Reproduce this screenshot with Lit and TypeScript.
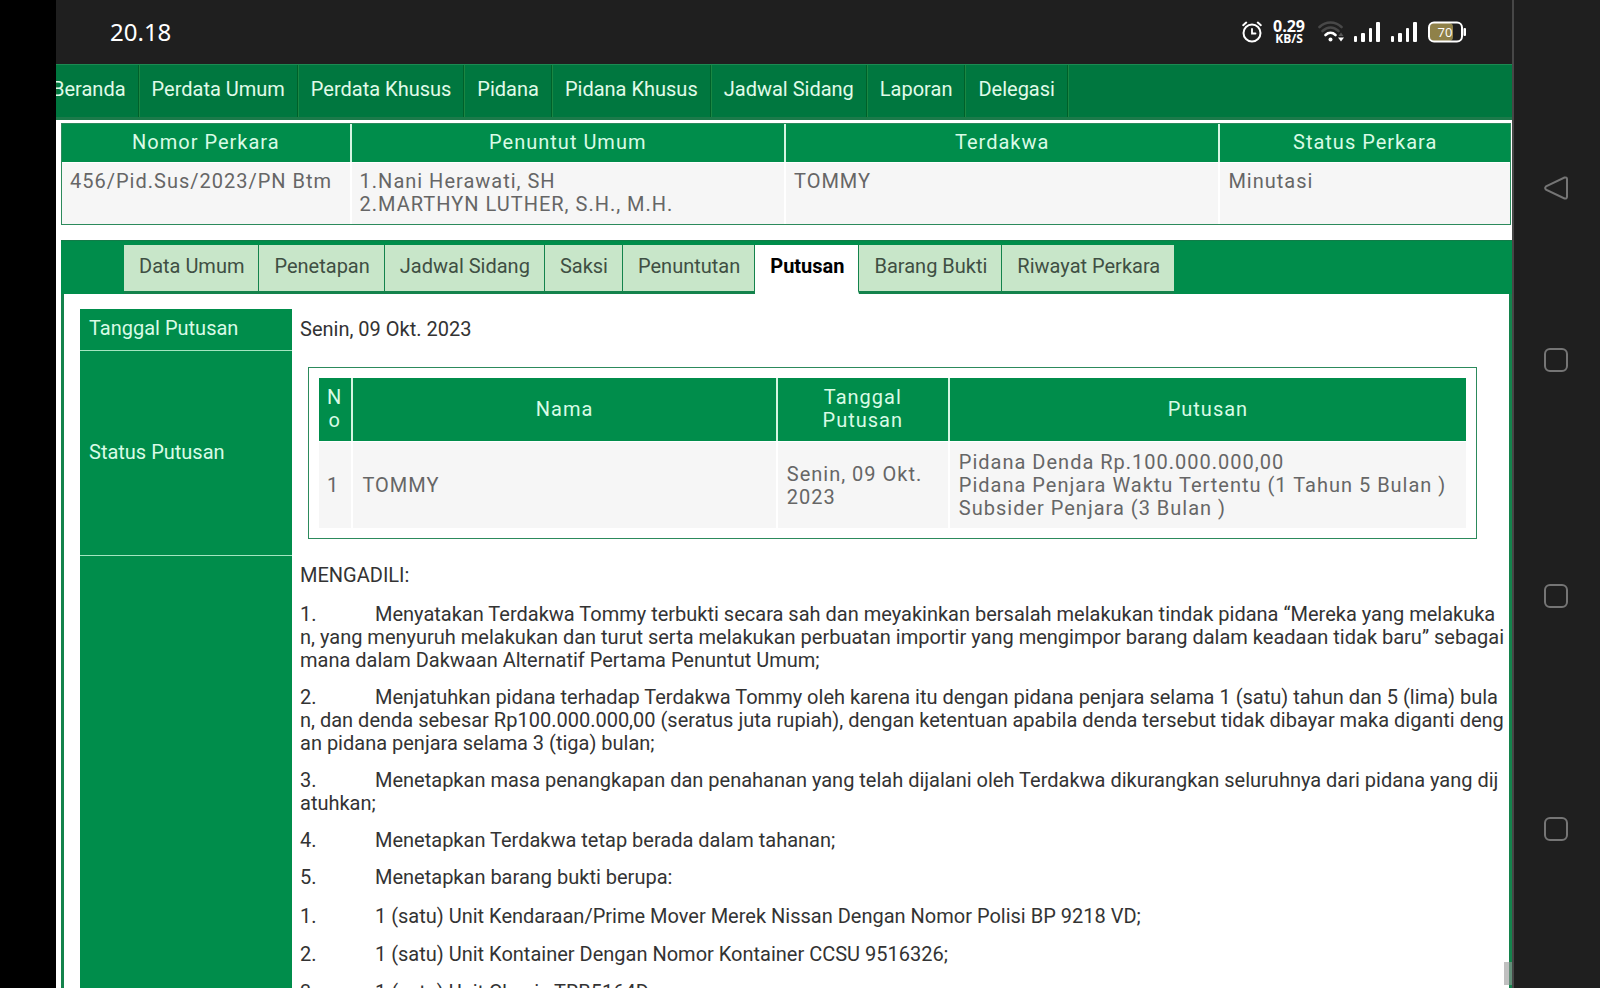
import { LitElement, html, css, svg } from "lit";
import { customElement, state } from "lit/decorators.js";

const MENU = ["Beranda", "Perdata Umum", "Perdata Khusus", "Pidana", "Pidana Khusus", "Jadwal Sidang", "Laporan", "Delegasi"];
const TABS = ["Data Umum", "Penetapan", "Jadwal Sidang", "Saksi", "Penuntutan", "Putusan", "Barang Bukti", "Riwayat Perkara"];

const RULINGS = [
  "Menyatakan Terdakwa Tommy terbukti secara sah dan meyakinkan bersalah melakukan tindak pidana “Mereka yang melakuka\nn, yang menyuruh melakukan dan turut serta melakukan perbuatan importir yang mengimpor barang dalam keadaan tidak baru” sebagai\nmana dalam Dakwaan Alternatif Pertama Penuntut Umum;",
  "Menjatuhkan pidana terhadap Terdakwa Tommy oleh karena itu dengan pidana penjara selama 1 (satu) tahun dan 5 (lima) bula\nn, dan denda sebesar Rp100.000.000,00 (seratus juta rupiah), dengan ketentuan apabila denda tersebut tidak dibayar maka diganti deng\nan pidana penjara selama 3 (tiga) bulan;",
  "Menetapkan masa penangkapan dan penahanan yang telah dijalani oleh Terdakwa dikurangkan seluruhnya dari pidana yang dij\natuhkan;",
  "Menetapkan Terdakwa tetap berada dalam tahanan;",
  "Menetapkan barang bukti berupa:",
];

const EVIDENCE = [
  "1 (satu) Unit Kendaraan/Prime Mover Merek Nissan Dengan Nomor Polisi BP 9218 VD;",
  "1 (satu) Unit Kontainer Dengan Nomor Kontainer CCSU 9516326;",
  "1 (satu) Unit Chasis TRB5164D;",
];

@customElement("status-bar")
export class StatusBar extends LitElement {
  static styles = css`
    :host { display: flex; align-items: center; justify-content: space-between; height: 64px; flex: none;
      padding: 0 46px 0 54px; background: #1f1f1f; color: #fff; font-family: "Noto Sans", sans-serif; }
    .clock { font-size: 24px; line-height: 32px; }
    .icons { display: flex; align-items: center; }
    .rate { display: flex; flex-direction: column; align-items: center; width: 34px; margin: 0 12px 0 9px;
      font-family: "Open Sans", sans-serif; font-weight: 700; }
    .speed { font-size: 16px; line-height: 14px; }
    .unit { font-size: 12px; line-height: 12px; }
    .wifi { margin-right: 9px; }
    .bars { margin-right: 11px; }
    .battery { display: block; }
    .level { font: 13px "Open Sans", sans-serif; }
    svg { display: block; }
  `;

  private bars() {
    return html`<svg class="bars" width="26" height="22" viewBox="0 0 26 22" fill="#fff" aria-hidden="true">
      <rect x="0" y="15" width="3" height="6" rx="1" /><rect x="7" y="12" width="4" height="9" rx="1" />
      <rect x="15" y="7" width="3" height="14" rx="1" /><rect x="22" y="1" width="4" height="20" rx="1" />
    </svg>`;
  }

  render() {
    return html`
      <time class="clock">20.18</time>
      <div class="icons">
        <svg width="21" height="22" viewBox="0 0 21 22" fill="none" stroke="#fff" stroke-width="2" stroke-linecap="round" aria-hidden="true">
          <circle cx="10" cy="12" r="8.500" /><path d="M10 8v4.500h3.500" stroke-width="1.800" />
          <path d="M1.200 4.200 4.200 1.600M18.800 4.200l-3-2.600" />
        </svg>
        <div class="rate"><span class="speed">0.29</span><span class="unit">KB/S</span></div>
        <svg class="wifi" width="27" height="22" viewBox="0 0 27 22" fill="none" stroke-width="2.600" stroke-linecap="round" aria-hidden="true">
          <path d="M1.500 6C8 0 17 0 23.500 6" stroke="#484848" />
          <path d="M4.500 10c5-4.600 11-4.600 16 0" stroke="#484848" />
          <path d="M7.500 14c3-2.800 7-2.800 10 0" stroke="#fff" />
          <circle cx="12.500" cy="18.500" r="2" fill="#fff" />
          <path d="M20.500 15l2.500-3.500 2.500 3.500z" fill="#555" />
          <path d="M20 16.500h6l-3 4z" fill="#fff" />
        </svg>
        ${this.bars()}${this.bars()}
        <svg class="battery" width="38" height="22" viewBox="0 0 38 22" role="img" aria-label="Baterai 70">
          <rect x="2" y="2" width="23" height="18" rx="4" fill="#8f8149" />
          <rect x="1" y="1.500" width="33" height="19" rx="5" fill="none" stroke="#fff" stroke-width="2" />
          <rect x="35.500" y="7" width="2.500" height="8" rx="1" fill="#fff" />
          <text class="level" x="17" y="15.500" text-anchor="middle" fill="#fff">70</text>
        </svg>
      </div>
    `;
  }
}

@customElement("system-keys")
export class SystemKeys extends LitElement {
  static styles = css`
    :host { display: grid; grid-template-rows: 100fr 244fr 228fr 238fr; place-items: center; box-sizing: border-box;
      height: 100vh; padding: 138px 2px 40px 0; background: #1f1f1f; border-left: 2px solid #474747; }
    .key { display: grid; place-items: center; width: 48px; height: 48px; padding: 0; border: 0; background: none; }
    svg { display: block; }
  `;

  render() {
    const square = svg`<rect x="1" y="1" width="22" height="22" rx="5" />`;
    const back = svg`<path d="M2 10.400 20.500 1.500Q22.800 1 23 3v18Q22.800 23 20.500 22.500L2 13.600Q.4 12 2 10.400Z" />`;
    const keys = [
      ["Kembali", back],
      ["Beranda", square],
      ["Aplikasi terbaru", square],
      ["Menu", square],
    ] as const;
    return keys.map(
      ([label, shape]) => html`<button class="key" type="button" aria-label=${label}>
        <svg width="24" height="24" viewBox="0 0 24 24" fill="none" stroke="#757575" stroke-width="2">${shape}</svg>
      </button>`
    );
  }
}

@customElement("app-root")
export class AppRoot extends LitElement {
  @state() private active = "Putusan";

  static styles = css`
    :host { display: grid; grid-template-columns: 56px minmax(0, 1fr) 88px; height: 100vh; overflow: hidden;
      background: #000; font: 20px/23px Roboto, sans-serif; color: #333; }
    .screen { grid-column: 2; display: flex; flex-direction: column; height: 100vh; background: #fff; overflow: hidden; position: relative; }
    .menu { display: flex; flex: none; box-sizing: border-box; height: 56px; padding-right: 16px; background: #00773f;
      border-top: 1px solid #1c8a52; border-bottom: 3px solid #1c7a4a; }
    .items { display: flex; margin: 0 0 0 -16px; padding: 0; list-style: none; }
    .link { display: block; box-sizing: border-box; height: 52px; padding: 13px 12px 0; color: #e0fbe9; text-decoration: none;
      white-space: nowrap; border-right: 1px solid #00602a; }
    .item { border-right: 1px solid #1b8743; }
    .page { flex: 1; min-height: 0; display: flex; flex-direction: column; gap: 15px; padding: 3px 0 0 5px; }

    table { border-spacing: 0; table-layout: fixed; width: 100%; }
    th, td { box-sizing: border-box; }
    th { font-weight: 400; }
    .grid { letter-spacing: 1px; color: #666; }
    .grid th { background: #008d4b; color: #d9fbe6; border-right: 2px solid #d5f5e2; }
    .grid td { background: #f6f6f6; border-right: 2px solid #fff; border-top: 1px solid #fff; }
    .grid tr > :last-child { border-right: 0; }

    .case { flex: none; box-sizing: border-box; width: calc(100% - 1px); border: 1px solid #2c8a5c; }
    .case th { padding: 7px 8px 8px; }
    .case td { height: 62px; padding: 7px 8px; vertical-align: top; }
    .case .w20 { width: 20%; }
    .case .w30 { width: 30%; }

    .detail { flex: 1; min-height: 0; display: flex; flex-direction: column; }
    .tabs { display: flex; flex: none; padding: 4px 0 0 63px; background: #008d4b; border-top: 1px solid #117c48; }
    .tab { box-sizing: border-box; height: 49px; padding: 0 14px 3px 15px; border: 0; border-right: 1px solid #14834c;
      border-bottom: 3px solid #14834c; background: #c8e6c9; color: #3f4f43; font: inherit; white-space: nowrap; }
    .tab.active { background: #fff; border-bottom-color: #fff; color: #000; font-weight: 700; }
    .tab:last-child { border-right: 0; }
    .panel { flex: 1; min-height: 0; padding: 15px 16px 0; border: solid #14834c; border-width: 0 3px; overflow: hidden; }

    .label { width: 212px; padding: 8px 9px 10px; background: #008d4b; color: #d9fbe6; text-align: left;
      border-bottom: 1px solid #a4e6c0; }
    .value { padding: 8px 8px 10px; }
    .framed { padding: 16px 16px 17px; }
    .frame { border: 1px solid #2c8a5c; padding: 10px; }
    .defs > tbody > tr > * { vertical-align: middle; }
    .result th { padding: 8px 9px 9px; }
    .result td { padding: 9px 9px 8px; vertical-align: middle; }
    .result .no { padding-left: 8px; word-break: break-all; }
    .result .c-no { width: 3%; }
    .result .c-name { width: 37%; }
    .result .c-date { width: 15%; }
    .result .c-verdict { width: 45%; }

    .ruling { display: flex; flex-direction: column; gap: 16px; margin-right: -14px; padding: 8px 0 8px 8px; word-break: break-all; }
    .ruling p, .ruling ol { margin: 0; padding: 0; list-style: none; }
    .list { display: flex; flex-direction: column; gap: 14px; }
    .list li { white-space: pre-wrap; tab-size: 75px; }
    .sub { gap: 15px; }
    .cell { padding: 0; }
    .thumb { position: absolute; right: 0; bottom: 3px; width: 8px; height: 23px; background: rgba(150, 150, 150, 0.6); }
  `;

  private entry(text: string, i: number) {
    return html`<li>${`${i + 1}.\t${text}`}</li>`;
  }

  render() {
    return html`
      <main class="screen">
        <status-bar></status-bar>
        <nav class="menu">
          <ul class="items">
            ${MENU.map((m) => html`<li class="item"><a class="link" href="#">${m}</a></li>`)}
          </ul>
        </nav>
        <div class="page">
          <table class="grid case">
            <thead>
              <tr>
                <th class="w20">Nomor Perkara</th><th class="w30">Penuntut Umum</th>
                <th class="w30">Terdakwa</th><th class="w20">Status Perkara</th>
              </tr>
            </thead>
            <tbody>
              <tr>
                <td>456/Pid.Sus/2023/PN Btm</td>
                <td>1.Nani Herawati, SH<br />2.MARTHYN LUTHER, S.H., M.H.</td>
                <td>TOMMY</td>
                <td>Minutasi</td>
              </tr>
            </tbody>
          </table>
          <section class="detail">
            <div class="tabs" role="tablist">
              ${TABS.map(
                (t) => html`<button type="button" role="tab" class="tab ${t === this.active ? "active" : ""}"
                  aria-selected=${t === this.active} @click=${() => (this.active = t)}>${t}</button>`
              )}
            </div>
            <div class="panel" role="tabpanel">
              <table class="defs">
                <tbody>
                  <tr><th class="label" scope="row">Tanggal Putusan</th><td class="value">Senin, 09 Okt. 2023</td></tr>
                  <tr>
                    <th class="label" scope="row">Status Putusan</th>
                    <td class="framed">
                      <div class="frame">
                        <table class="grid result">
                          <thead>
                            <tr>
                              <th class="c-no no">No</th><th class="c-name">Nama</th>
                              <th class="c-date">Tanggal Putusan</th><th class="c-verdict">Putusan</th>
                            </tr>
                          </thead>
                          <tbody>
                            <tr>
                              <td class="no">1</td>
                              <td>TOMMY</td>
                              <td>Senin, 09 Okt. 2023</td>
                              <td>Pidana Denda Rp.100.000.000,00<br />Pidana Penjara Waktu Tertentu (1 Tahun 5 Bulan )<br />Subsider Penjara (3 Bulan )</td>
                            </tr>
                          </tbody>
                        </table>
                      </div>
                    </td>
                  </tr>
                  <tr>
                    <th class="label" scope="row"></th>
                    <td class="cell">
                      <div class="ruling">
                        <p>MENGADILI:</p>
                        <ol class="list">${RULINGS.map((t, i) => this.entry(t, i))}</ol>
                        <ol class="list sub">${EVIDENCE.map((t, i) => this.entry(t, i))}</ol>
                      </div>
                    </td>
                  </tr>
                </tbody>
              </table>
            </div>
          </section>
        </div>
        <div class="thumb"></div>
      </main>
      <system-keys></system-keys>
    `;
  }
}
